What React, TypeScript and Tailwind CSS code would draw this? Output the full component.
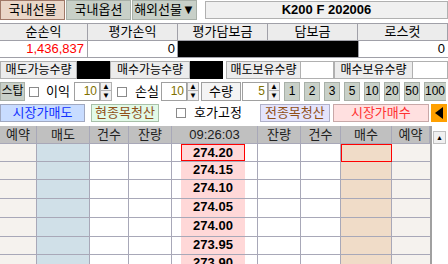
import React from "react"

const numBtns = ["1", "2", "3", "5", "10", "20", "50"]

const heads = [
  { t: "예약", w: "w-[37px]" },
  { t: "매도", w: "w-[53px]" },
  { t: "건수", w: "w-[39px]" },
  { t: "잔량", w: "w-[43px]" },
  { t: "09:26:03", w: "w-[86px]" },
  { t: "잔량", w: "w-[43px]" },
  { t: "건수", w: "w-[40px]" },
  { t: "매수", w: "w-[51px]" },
  { t: "예약", w: "w-[38px]" },
]

const rows = [
  { p: "274.20", h: "h-[18px]", sel: true },
  { p: "274.15", h: "h-[18px]" },
  { p: "274.10", h: "h-[19px]" },
  { p: "274.05", h: "h-[19px]" },
  { p: "274.00", h: "h-[19px]" },
  { p: "273.95", h: "h-[18px]" },
  { p: "273.90", h: "h-[18px]" },
]

function Check() {
  return <span className="inline-block w-[10px] h-[10px] border border-[#8a8a8a] bg-white" />
}

function Spin({ v }: { v: string }) {
  return (
    <div className="flex h-[19px]">
      <div className="w-[26px] border border-[#a0a0a0] bg-white text-right pr-[2px] text-[12px] leading-[17px] text-[#807000]">{v}</div>
      <div className="flex w-[12px] flex-col">
        <div className="flex h-[9px] items-center justify-center border border-[#b0b0b0] bg-[#f0f0f0] text-[8px] leading-none">▲</div>
        <div className="flex h-[10px] items-center justify-center border border-t-0 border-[#b0b0b0] bg-[#f0f0f0] text-[8px] leading-none">▼</div>
      </div>
    </div>
  )
}

export default function App() {
  return (
    <div className="w-[448px] h-[264px] overflow-hidden bg-white font-['Liberation_Sans','Noto_Sans_CJK_KR',sans-serif] text-[13px] text-black">
      {/* 상단 탭 */}
      <div className="flex h-[20px]">
        <div className="flex w-[65px] items-center justify-center border border-[#a07868] bg-[#ead6c8] text-[13px]">국내선물</div>
        <div className="ml-[1px] flex w-[65px] items-center justify-center border border-[#a8b0a8] bg-[#c8d0c8] text-[13px]">국내옵션</div>
        <div className="ml-[1px] flex w-[65px] items-center justify-center border border-[#a8b0a8] bg-[#c8d0c8] text-[13px]">해외선물▼</div>
        <div className="ml-[8px] mt-[1px] flex h-[18px] flex-1 items-center justify-center border border-[#b0b0b0] bg-[#f0f0f0] font-bold text-[13px]">K200 F 202006</div>
      </div>

      {/* 손익 */}
      <div className="mt-[3px] grid grid-cols-[88px_90px_90px_90px_90px] border-t border-[#a0a0a8]">
        {["순손익", "평가손익", "평가담보금", "담보금", "로스컷"].map((t) => (
          <div key={t} className="h-[17px] border-r border-b border-[#a0a0a8] bg-[#ececec] text-center text-[13px] leading-[16px]">{t}</div>
        ))}
        <div className="h-[17px] border-r border-b border-[#a0a0a8] bg-white pr-[3px] text-right text-[13px] leading-[16px] text-[#ff0000]">1,436,837</div>
        <div className="h-[17px] border-r border-b border-[#a0a0a8] bg-white pr-[2px] text-right text-[13px] leading-[16px]">0</div>
        <div className="col-span-2 h-[17px] border-b border-[#a0a0a8] bg-black" />
        <div className="h-[17px] border-b border-l border-[#a0a0a8] bg-white pr-[3px] text-right text-[13px] leading-[16px]">0</div>
      </div>

      {/* 수량 */}
      <div className="mt-[3px] flex h-[18px]">
        <div className="w-[77px] border border-[#b0b0b0] bg-[#ececec] text-center text-[12px] leading-[16px]">매도가능수량</div>
        <div className="w-[33px] bg-black" />
        <div className="w-[80px] border border-[#b0b0b0] bg-[#ececec] text-center text-[12px] leading-[16px]">매수가능수량</div>
        <div className="w-[33px] bg-black" />
        <div className="ml-[3px] w-[75px] border border-[#b0b0b0] bg-[#ececec] text-center text-[12px] leading-[16px]">매도보유수량</div>
        <div className="w-[33px] border border-l-0 border-[#b0b0b0] bg-white" />
        <div className="w-[79px] border border-[#b0b0b0] bg-[#ececec] text-center text-[12px] leading-[16px]">매수보유수량</div>
        <div className="flex-1 border border-l-0 border-[#b0b0b0] bg-white" />
      </div>

      {/* 스탑 */}
      <div className="mt-[3px] flex h-[19px] items-center">
        <div className="h-[19px] w-[25px] border border-[#a8b0a8] bg-[#c8d0c8] text-center text-[12px] leading-[17px]">스탑</div>
        <div className="ml-[4px] flex items-center"><Check /></div>
        <span className="ml-[7px] w-[28px] text-[13px]">이익</span>
        <Spin v="10" />
        <div className="ml-[5px] flex items-center"><Check /></div>
        <span className="ml-[8px] w-[26px] text-[13px]">손실</span>
        <Spin v="10" />
        <div className="ml-[2px] h-[19px] w-[40px] border border-[#a0a0a0] bg-[#f4f4f4] text-center text-[13px] leading-[17px]">수량</div>
        <div className="ml-[1px]"><Spin v="5" /></div>
        <div className="ml-[4px] flex gap-[4px]">
          {numBtns.map((n) => (
            <div key={n} className="h-[19px] w-[16px] border border-[#a8b0a8] bg-[#c8d0c8] text-center text-[12px] leading-[17px]">{n}</div>
          ))}
          <div className="h-[19px] w-[22px] border border-r-0 border-[#a8b0a8] bg-[#c8d0c8] text-left text-[12px] leading-[17px]">100</div>
        </div>
      </div>

      {/* 주문 버튼 */}
      <div className="mt-[3px] flex h-[18px] items-center">
        <div className="h-[18px] w-[85px] border border-[#a0a8c0] bg-[#c8dcff] text-center text-[13px] leading-[16px] text-[#1030ff]">시장가매도</div>
        <div className="ml-[6px] h-[18px] w-[68px] border border-[#a8c0a8] bg-[#e2fae8] text-center text-[13px] leading-[16px] text-[#905018]">현종목청산</div>
        <div className="ml-[17px] flex items-center"><Check /></div>
        <span className="ml-[8px] text-[13px]">호가고정</span>
        <div className="ml-[18px] h-[18px] w-[70px] border border-[#b0b0c8] bg-[#e4e4fc] text-center text-[13px] leading-[16px] text-[#905018]">전종목청산</div>
        <div className="ml-[3px] h-[18px] w-[96px] border border-[#c8a8a8] bg-[#ffe0e0] text-center text-[13px] leading-[16px] text-[#ff3030]">시장가매수</div>
        <div className="ml-[2px] flex h-[18px] w-[16px] items-center justify-center bg-[#ffa000]">
          <svg width="10" height="12" viewBox="0 0 10 12"><path d="M9 0 L9 12 L1 6 Z" fill="#000" /></svg>
        </div>
      </div>

      {/* 호가 */}
      <div className="mt-[4px] flex">
        <div className="flex flex-col">
          <div className="flex h-[18px]">
            {heads.map((h, i) => (
              <div key={i} className={`${h.w} border-r border-b border-[#a8a8b8] bg-[#c0c0c0] text-center text-[13px] leading-[17px] text-[#202020]`}>{h.t}</div>
            ))}
          </div>
          {rows.map((r) => (
            <div key={r.p} className={`flex ${r.h}`}>
              <div className="w-[37px] border-r border-b border-[#a8a8b8] bg-[#f5f2ee]" />
              <div className="w-[53px] border-r border-b border-[#a8a8b8] bg-[#d0e0e8]" />
              <div className="w-[39px] border-r border-b border-[#a8a8b8] bg-white" />
              <div className="w-[43px] border-r border-b border-[#a8a8b8] bg-white" />
              <div className="flex w-[86px] border-r border-b border-[#a8a8b8] bg-white">
                <div className="w-[9px]" />
                <div className={`w-[64px] bg-[#ffd8d8] text-center font-bold text-[13px] leading-[16px] ${r.sel ? "border border-[#ff0000]" : ""}`}>{r.p}</div>
              </div>
              <div className="w-[43px] border-r border-b border-[#a8a8b8] bg-white" />
              <div className="w-[40px] border-r border-b border-[#a8a8b8] bg-white" />
              <div className={`w-[51px] border-r border-b border-[#a8a8b8] bg-[#f0dcc8] ${r.sel ? "border border-[#ff0000]" : ""}`} />
              <div className="w-[38px] border-b border-[#a8a8b8] bg-[#f5f2ee]" />
            </div>
          ))}
        </div>
        {/* 스크롤 */}
        <div className="flex w-[18px] flex-col border-l-2 border-[#a0a0a0] bg-white pt-[5px] pl-[1px]">
          <div className="flex h-[13px] w-[13px] items-center justify-center border border-[#c0c0c0] bg-[#f0f0f0] text-[7px] leading-none">▲</div>
        </div>
      </div>
    </div>
  )
}
